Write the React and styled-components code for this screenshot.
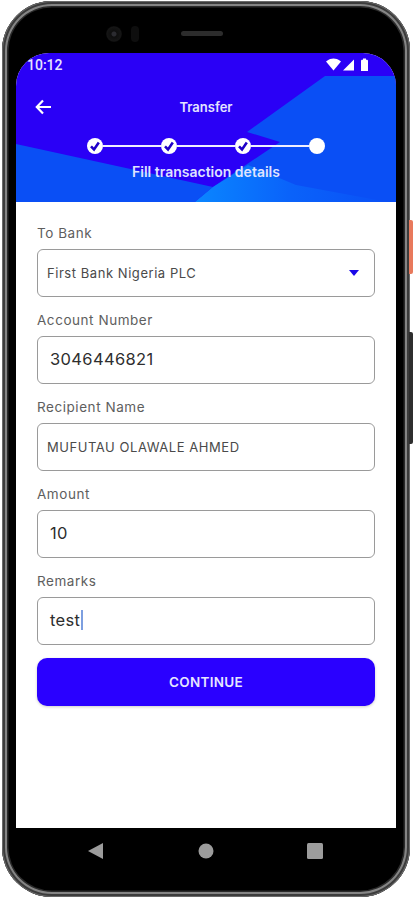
import React from "react";
import styled, { createGlobalStyle } from "styled-components";

const Global = createGlobalStyle`
  html, body { margin: 0; padding: 0; background: #fff; }
  body { font-family: Inter, "Noto Sans", sans-serif; }
  * { box-sizing: border-box; }
`;

const Page = styled.div`
  width: 413px;
  height: 900px;
  padding: 1px 3px 3px 2px;
  overflow: hidden;
`;

const Phone = styled.div`
  position: relative;
  width: 408px;
  height: 896px;
  display: flex;
  flex-direction: column;
  padding: 0 14px;
  background: #000;
  border-radius: 50px;
  box-shadow: inset 0 0 0 1px #6a6a6a, inset 0 0 0 3px #3c3c3c, inset 0 0 0 5px #858585, inset 0 0 0 6.5px #2a2a2a;
`;

const SideKey = styled.span`
  position: absolute;
  left: 407px;
  top: ${(p) => p.$top}px;
  width: 4px;
  height: ${(p) => p.$height}px;
  background: ${(p) => p.$color};
  border-radius: 0 2px 2px 0;
`;

const TopBezel = styled.div`
  height: 52px;
  flex: none;
  position: relative;
  display: flex;
  align-items: center;
  padding: 14px 0 0 90px;
`;

const Camera = styled.span`
  width: 16px;
  height: 16px;
  border-radius: 50%;
  background: radial-gradient(circle, #2b2b30 0 2px, #0e0e0e 3px, #151515 7px, #0a0a0a 8px);
`;

const Sensor = styled.span`
  width: 8px;
  height: 16px;
  margin-left: 9px;
  border-radius: 4px;
  background: #0e0e0e;
`;

const Speaker = styled.span`
  width: 42px;
  height: 5px;
  margin-left: 42px;
  margin-top: -2px;
  border-radius: 3px;
  background: #2c2c2c;
`;

const Screen = styled.div`
  width: 380px;
  height: 775px;
  flex: none;
  background: #fff;
  border-radius: 33px 33px 0 0;
  overflow: hidden;
  display: flex;
  flex-direction: column;
`;

const Header = styled.header`
  position: relative;
  height: 149px;
  flex: none;
  background: #2a00f6;
  color: #fff;
  overflow: hidden;
`;

const HeaderArt = styled.svg`
  position: absolute;
  inset: 0;
  width: 380px;
  height: 149px;
`;

const HeaderContent = styled.div`
  position: relative;
  display: flex;
  flex-direction: column;
  align-items: center;
`;

const StatusBar = styled.div`
  width: 100%;
  height: 24px;
  display: flex;
  align-items: center;
  justify-content: space-between;
  padding: 0 26px 0 11px;
`;

const Clock = styled.span`
  font: 500 14px/1 Roboto, sans-serif;
  color: #e6e4ff;
`;

const StatusIcons = styled.svg`
  width: 44px;
  height: 14px;
`;

const Toolbar = styled.div`
  position: relative;
  width: 100%;
  height: 32px;
  margin-top: 14px;
  display: flex;
  align-items: center;
  justify-content: center;
`;

const BackIcon = styled.svg`
  position: absolute;
  left: 19px;
  top: 8px;
  width: 17px;
  height: 16px;
`;

const Title = styled.h1`
  margin: 0;
  font-size: 13px;
  font-weight: 600;
  color: #e4e4ff;
`;

const Stepper = styled.div`
  width: 238px;
  height: 16px;
  margin-top: 15px;
  display: flex;
  align-items: center;
`;

const Dot = styled.span`
  width: 16px;
  height: 16px;
  flex: none;
  border-radius: 50%;
  background: #fff;
  display: flex;
  align-items: center;
  justify-content: center;
`;

const Connector = styled.span`
  flex: 1;
  height: 2px;
  background: #f0f0ff;
`;

const Caption = styled.p`
  margin: 10px 0 0;
  font-size: 14px;
  line-height: 16px;
  font-weight: 600;
  color: #dfe3ff;
`;

const Form = styled.main`
  flex: 1;
  padding: 21px 21px 0;
  display: flex;
  flex-direction: column;
`;

const Field = styled.div`
  display: flex;
  flex-direction: column;
  margin-bottom: 13px;
`;

const Label = styled.label`
  height: 26px;
  font-size: 13.5px;
  line-height: 20px;
  letter-spacing: 0.55px;
  color: #5e5e5e;
`;

const Box = styled.div`
  height: 48px;
  border: 1px solid #9a9a9a;
  border-radius: 6px;
  display: flex;
  align-items: center;
  justify-content: space-between;
  padding: 0 13px ${(p) => (p.$big ? 3 : 1)}px ${(p) => (p.$big ? 12 : 9)}px;
  color: ${(p) => (p.$big ? "#2e2e2e" : "#4a4a4a")};
  font-size: ${(p) => (p.$big ? 16.5 : 13)}px;
  letter-spacing: ${(p) => (p.$big ? 0.35 : 0.55)}px;
`;

const Caret = styled.span`
  display: inline-block;
  width: 1.5px;
  height: 20px;
  margin-left: 1px;
  background: #7d9fe0;
`;

const Value = styled.span`
  display: flex;
  align-items: center;
`;

const Arrow = styled.span`
  width: 0;
  height: 0;
  margin-right: 2px;
  border-left: 5px solid transparent;
  border-right: 5px solid transparent;
  border-top: 6px solid #1a08e8;
`;

const Button = styled.button`
  height: 48px;
  border: 0;
  border-radius: 10px;
  background: #2a00ff;
  color: #e6e6ff;
  font: 600 13.5px Inter, sans-serif;
  letter-spacing: 0.3px;
  box-shadow: 0 1px 3px rgba(0, 0, 0, 0.2);
`;

const NavBar = styled.nav`
  flex: 1;
  display: flex;
  align-items: flex-start;
  padding: 15px 0 0 72px;
`;

const NavIcon = styled.svg`
  width: 16px;
  height: 16px;
  flex: none;
  margin-right: ${(p) => p.$gap || 0}px;
  fill: #9c9c9c;
`;

const Check = () => (
  <svg width="12" height="12" viewBox="0 0 12 12">
    <path d="M2 6.4 5 9.4 9.8 2.6" fill="none" stroke="#1f00c8" strokeWidth="2.6" />
  </svg>
);

export default function App() {
  return (
    <Page>
      <Global />
      <Phone>
        <SideKey $top={219} $height={54} $color="#e8795c" />
        <SideKey $top={331} $height={112} $color="#2e2e2e" />
        <TopBezel>
          <Camera />
          <Sensor />
          <Speaker />
        </TopBezel>
        <Screen>
          <Header>
            <HeaderArt viewBox="0 0 380 149">
              <defs>
                <linearGradient id="glow" x1="0" x2="1" y1="0" y2="0">
                  <stop offset="0" stopColor="#0a86ff" />
                  <stop offset="0.5" stopColor="#0a62fa" />
                  <stop offset="1" stopColor="#0a50f6" />
                </linearGradient>
              </defs>
              <polygon points="0,91 197,134 179,149 0,149" fill="#0a4ff5" />
              <polygon points="309,23 380,23 380,149 179,149 197,134 264,89 231,79" fill="#0a4ff5" />
              <polygon points="197,134 179,149 372,149 280,132 232,112" fill="url(#glow)" />
            </HeaderArt>
            <HeaderContent>
              <StatusBar>
                <Clock>10:12</Clock>
                <StatusIcons viewBox="0 0 44 14">
                  <path d="M0 3.6C3 1.2 5.5.6 7.5.6s4.500.6 7.500 3L7.500 12.500Z" fill="#fff" />
                  <path d="M17 12.500 28 1.500v11Z" fill="#fff" />
                  <path d="M35 3c0-.8.5-1.300 1.500-1.300h.5V.6h3v1.100h.5c1 0 1.500.5 1.500 1.300v10h-7Z" fill="#fff" />
                </StatusIcons>
              </StatusBar>
              <Toolbar>
                <BackIcon viewBox="0 0 17 16">
                  <path d="M8 1.500 1.800 8 8 14.500M2 8h14" fill="none" stroke="#fff" strokeWidth="2.2" />
                </BackIcon>
                <Title>Transfer</Title>
              </Toolbar>
              <Stepper>
                <Dot><Check /></Dot>
                <Connector />
                <Dot><Check /></Dot>
                <Connector />
                <Dot><Check /></Dot>
                <Connector />
                <Dot />
              </Stepper>
              <Caption>Fill transaction details</Caption>
            </HeaderContent>
          </Header>
          <Form>
            <Field>
              <Label>To Bank</Label>
              <Box>
                <Value>First Bank Nigeria PLC</Value>
                <Arrow />
              </Box>
            </Field>
            <Field>
              <Label>Account Number</Label>
              <Box $big><Value>3046446821</Value></Box>
            </Field>
            <Field>
              <Label>Recipient Name</Label>
              <Box><Value>MUFUTAU OLAWALE AHMED</Value></Box>
            </Field>
            <Field>
              <Label>Amount</Label>
              <Box $big><Value>10</Value></Box>
            </Field>
            <Field>
              <Label>Remarks</Label>
              <Box $big><Value>test<Caret /></Value></Box>
            </Field>
            <Button>CONTINUE</Button>
          </Form>
        </Screen>
        <NavBar>
          <NavIcon $gap={94} viewBox="0 0 16 16"><path d="M15 0v16L0 8Z" /></NavIcon>
          <NavIcon $gap={93} viewBox="0 0 16 16"><circle cx="8" cy="8" r="7.5" /></NavIcon>
          <NavIcon viewBox="0 0 16 16"><rect width="16" height="16" rx="1.5" /></NavIcon>
        </NavBar>
      </Phone>
    </Page>
  );
}
